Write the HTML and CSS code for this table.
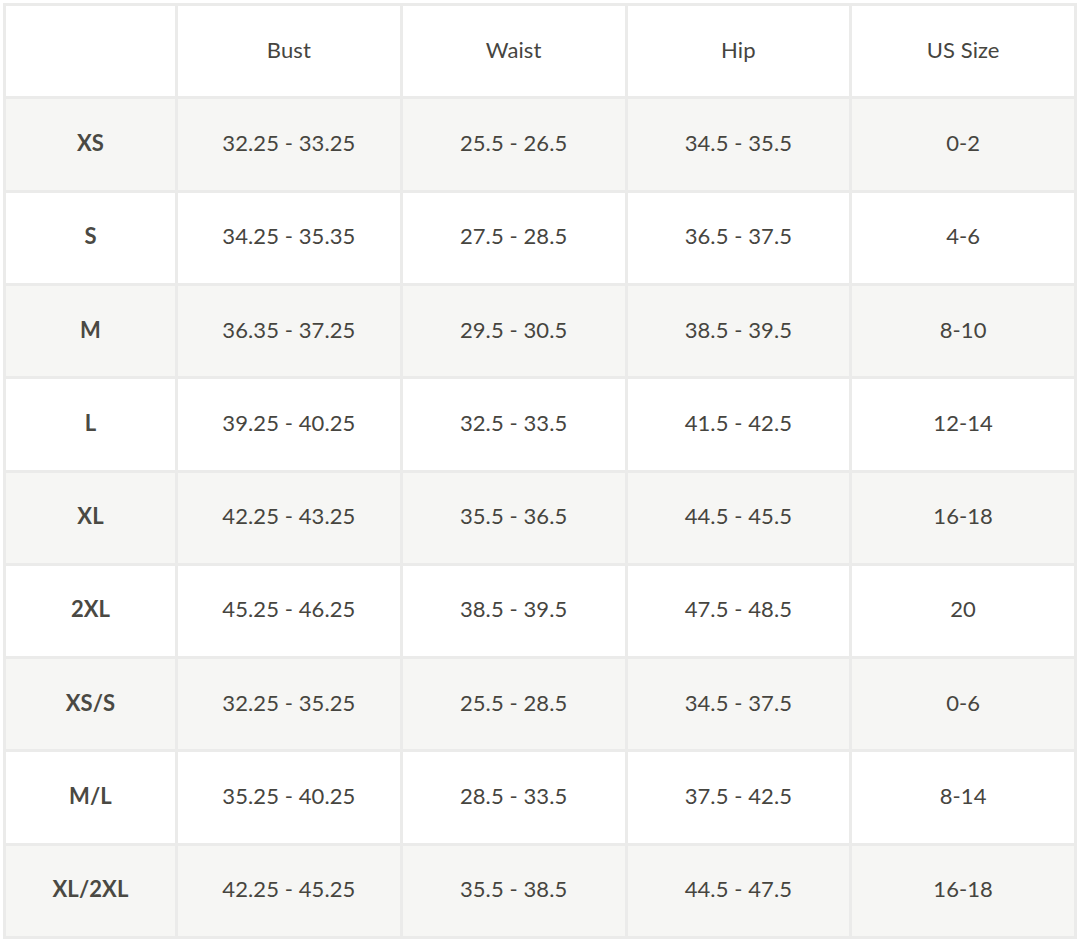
FILE: index.html
```html
<!DOCTYPE html>
<html lang="en">
<head>
<meta charset="utf-8">
<title>Size chart</title>
<link rel="stylesheet" href="styles.css">
</head>
<body>
<div class="chart">
  <div class="cell head"></div>
  <div class="cell head">Bust</div>
  <div class="cell head">Waist</div>
  <div class="cell head">Hip</div>
  <div class="cell head">US Size</div>

  <div class="cell alt size">XS</div>
  <div class="cell alt">32.25 - 33.25</div>
  <div class="cell alt">25.5 - 26.5</div>
  <div class="cell alt">34.5 - 35.5</div>
  <div class="cell alt">0-2</div>

  <div class="cell size">S</div>
  <div class="cell">34.25 - 35.35</div>
  <div class="cell">27.5 - 28.5</div>
  <div class="cell">36.5 - 37.5</div>
  <div class="cell">4-6</div>

  <div class="cell alt size">M</div>
  <div class="cell alt">36.35 - 37.25</div>
  <div class="cell alt">29.5 - 30.5</div>
  <div class="cell alt">38.5 - 39.5</div>
  <div class="cell alt">8-10</div>

  <div class="cell size">L</div>
  <div class="cell">39.25 - 40.25</div>
  <div class="cell">32.5 - 33.5</div>
  <div class="cell">41.5 - 42.5</div>
  <div class="cell">12-14</div>

  <div class="cell alt size">XL</div>
  <div class="cell alt">42.25 - 43.25</div>
  <div class="cell alt">35.5 - 36.5</div>
  <div class="cell alt">44.5 - 45.5</div>
  <div class="cell alt">16-18</div>

  <div class="cell size">2XL</div>
  <div class="cell">45.25 - 46.25</div>
  <div class="cell">38.5 - 39.5</div>
  <div class="cell">47.5 - 48.5</div>
  <div class="cell">20</div>

  <div class="cell alt size">XS/S</div>
  <div class="cell alt">32.25 - 35.25</div>
  <div class="cell alt">25.5 - 28.5</div>
  <div class="cell alt">34.5 - 37.5</div>
  <div class="cell alt">0-6</div>

  <div class="cell size">M/L</div>
  <div class="cell">35.25 - 40.25</div>
  <div class="cell">28.5 - 33.5</div>
  <div class="cell">37.5 - 42.5</div>
  <div class="cell">8-14</div>

  <div class="cell alt size">XL/2XL</div>
  <div class="cell alt">42.25 - 45.25</div>
  <div class="cell alt">35.5 - 38.5</div>
  <div class="cell alt">44.5 - 47.5</div>
  <div class="cell alt">16-18</div>
</div>
</body>
</html>
```
FILE: styles.css
```css
html, body {
  margin: 0;
  padding: 0;
  background: #ffffff;
}
body {
  padding: 3px;
  font-family: Lato, "Liberation Sans", sans-serif;
  color: #46453f;
}
.chart {
  width: 1074px;
  height: 936px;
  box-sizing: border-box;
  padding: 3px;
  background: #ebebea;
  display: grid;
  grid-template-columns: 169px repeat(4, 1fr);
  grid-template-rows: repeat(10, 1fr);
  gap: 3px;
}
.cell {
  background: #ffffff;
  display: flex;
  align-items: center;
  justify-content: center;
  padding-bottom: 4px;
  font-size: 22px;
  font-weight: 400;
  letter-spacing: 0.1px;
}
.alt {
  background: #f6f6f4;
}
.size {
  font-weight: 700;
  color: #4a4943;
}
```
